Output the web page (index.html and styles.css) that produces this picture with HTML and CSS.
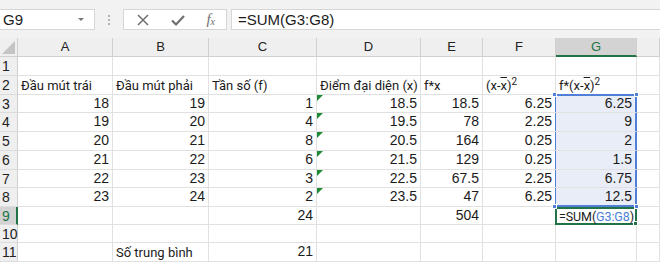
FILE: index.html
```html
<!DOCTYPE html>
<html lang="vi">
<head>
  <meta charset="UTF-8" />
  <title>Sheet</title>
  <link rel="stylesheet" href="styles.css">
</head>
<body>
  <div class="toolbar">
    <div class="name-box">
      <span>G9</span>
      <span class="caret"></span>
    </div>
    <div class="grip"><i></i><i></i><i></i></div>
    <div class="fx-buttons">
      <svg width="14" height="14" viewBox="0 0 14 14"><path d="M2 2 L12 12 M12 2 L2 12" stroke="#6f6f6f" stroke-width="1.5" fill="none"/></svg>
      <svg width="16" height="14" viewBox="0 0 16 14"><path d="M2 7.5 L6 11.5 L14 3" stroke="#6f6f6f" stroke-width="2.2" fill="none"/></svg>
      <span class="fx">f<sub>x</sub></span>
    </div>
    <div class="formula">=SUM(G3:G8)</div>
  </div>

  <div class="sheet">
    <div class="corner"><span></span></div>
    <div class="col-head">A</div>
    <div class="col-head">B</div>
    <div class="col-head">C</div>
    <div class="col-head">D</div>
    <div class="col-head">E</div>
    <div class="col-head">F</div>
    <div class="col-head active">G</div>
    <div class="col-head"></div>

    <div class="row-head">1</div>
    <div class="cell"></div><div class="cell"></div><div class="cell"></div><div class="cell"></div><div class="cell"></div><div class="cell"></div><div class="cell"></div><div class="cell"></div>

    <div class="row-head">2</div>
    <div class="cell txt">Đầu mút trái</div>
    <div class="cell txt">Đầu mút phải</div>
    <div class="cell txt">Tần số (f)</div>
    <div class="cell txt">Điểm đại diện (x)</div>
    <div class="cell txt">f*x</div>
    <div class="cell txt">(x-<span class="bar">x</span>)<sup>2</sup></div>
    <div class="cell txt">f*(x-<span class="bar">x</span>)<sup>2</sup></div>
    <div class="cell"></div>

    <div class="row-head">3</div>
    <div class="cell num">18</div><div class="cell num">19</div><div class="cell num">1</div>
    <div class="cell num flag">18.5</div><div class="cell num">18.5</div><div class="cell num">6.25</div>
    <div class="cell num sel top"><i class="h tl"></i><i class="h tr"></i>6.25</div><div class="cell"></div>

    <div class="row-head">4</div>
    <div class="cell num">19</div><div class="cell num">20</div><div class="cell num">4</div>
    <div class="cell num flag">19.5</div><div class="cell num">78</div><div class="cell num">2.25</div>
    <div class="cell num sel">9</div><div class="cell"></div>

    <div class="row-head">5</div>
    <div class="cell num">20</div><div class="cell num">21</div><div class="cell num">8</div>
    <div class="cell num flag">20.5</div><div class="cell num">164</div><div class="cell num">0.25</div>
    <div class="cell num sel">2</div><div class="cell"></div>

    <div class="row-head">6</div>
    <div class="cell num">21</div><div class="cell num">22</div><div class="cell num">6</div>
    <div class="cell num flag">21.5</div><div class="cell num">129</div><div class="cell num">0.25</div>
    <div class="cell num sel">1.5</div><div class="cell"></div>

    <div class="row-head">7</div>
    <div class="cell num">22</div><div class="cell num">23</div><div class="cell num">3</div>
    <div class="cell num flag">22.5</div><div class="cell num">67.5</div><div class="cell num">2.25</div>
    <div class="cell num sel">6.75</div><div class="cell"></div>

    <div class="row-head">8</div>
    <div class="cell num">23</div><div class="cell num">24</div><div class="cell num">2</div>
    <div class="cell num flag">23.5</div><div class="cell num">47</div><div class="cell num">6.25</div>
    <div class="cell num sel bot"><i class="h bl"></i><i class="h br"></i>12.5</div><div class="cell"></div>

    <div class="row-head active">9</div>
    <div class="cell"></div><div class="cell"></div><div class="cell num">24</div>
    <div class="cell"></div><div class="cell num">504</div><div class="cell"></div>
    <div class="cell edit">=SUM(<span class="ref">G3:G8</span>)<i class="h br"></i></div><div class="cell"></div>

    <div class="row-head">10</div>
    <div class="cell"></div><div class="cell"></div><div class="cell"></div><div class="cell"></div><div class="cell"></div><div class="cell"></div><div class="cell"></div><div class="cell"></div>

    <div class="row-head">11</div>
    <div class="cell"></div><div class="cell txt">Số trung bình</div><div class="cell num">21</div>
    <div class="cell"></div><div class="cell"></div><div class="cell"></div><div class="cell"></div><div class="cell"></div>
  </div>
</body>
</html>
```

FILE: styles.css
```css
:root {
  --grid: #e1e1e1;
  --head-bg: #efefef;
  --head-line: #d0d0d0;
  --green: #217346;
  --blue: #4f7fd6;
}
* {
  margin: 0;
  padding: 0;
  box-sizing: border-box;
}
body {
  background: #fff;
  font-family: 'Liberation Sans', Arial, sans-serif;
  color: #1b1b1b;
  width: 660px;
  height: 262px;
  overflow: hidden;
}

/* formula bar */
.toolbar {
  height: 38px;
  background: #f2f2f2;
  display: flex;
  align-items: flex-start;
  padding-top: 9px;
}
.name-box {
  width: 95px;
  height: 21px;
  background: #fff;
  border: 1px solid #d6d6d6;
  border-left: none;
  display: flex;
  align-items: center;
  justify-content: space-between;
  padding: 0 10px 0 3px;
  font-size: 15px;
}
.caret {
  width: 0;
  height: 0;
  border-left: 3px solid transparent;
  border-right: 3px solid transparent;
  border-top: 3px solid #777;
}
.grip {
  width: 28px;
  height: 21px;
  display: flex;
  flex-direction: column;
  align-items: center;
  justify-content: center;
  gap: 2px;
}
.grip i {
  width: 2px;
  height: 2px;
  background: #b4b4b4;
}
.fx-buttons {
  width: 104px;
  height: 21px;
  background: #fff;
  border: 1px solid #d6d6d6;
  display: flex;
  align-items: center;
  justify-content: space-between;
  padding: 0 11px 0 12px;
}
.fx {
  font-family: 'Liberation Serif', 'Times New Roman', serif;
  font-style: italic;
  font-size: 15px;
  color: #6f6f6f;
  line-height: 1;
}
.fx sub {
  font-size: 10px;
  vertical-align: -1px;
}
.formula {
  flex: 1;
  height: 21px;
  margin-left: 4px;
  background: #fff;
  border: 1px solid #d6d6d6;
  border-right: none;
  font-size: 15px;
  padding: 1px 0 0 6px;
}

/* sheet */
.sheet {
  display: grid;
  grid-template-columns: 18px 95px 96px 108px 104px 62px 73px 81px 1fr;
  grid-template-rows: 19px 19px 19px 18px 19px 19px 19px 18px 19px 18px 18px 19px;
  font-size: 14px;
}
.corner {
  background: var(--head-bg);
  border-right: 1px solid var(--head-line);
  border-bottom: 1px solid var(--head-line);
  display: flex;
  align-items: flex-end;
  justify-content: flex-end;
  padding: 0 2px 2px 0;
}
.corner span {
  width: 0;
  height: 0;
  border-left: 13px solid transparent;
  border-bottom: 13px solid #c4c4c4;
}
.col-head {
  background: var(--head-bg);
  border-right: 1px solid var(--head-line);
  border-bottom: 1px solid var(--head-line);
  text-align: center;
  font-size: 13px;
  line-height: 18px;
  color: #222;
}
.col-head.active {
  background: #d3d3d3;
  color: var(--green);
  border-bottom: 2px solid var(--green);
}
.row-head {
  background: var(--head-bg);
  border-right: 1px solid var(--head-line);
  border-bottom: 1px solid #dcdcdc;
  font-size: 14px;
  line-height: 18px;
  padding-left: 2px;
  color: #222;
}
.row-head.active {
  background: #d3d3d3;
  color: var(--green);
  border-right: 2px solid var(--green);
}
.cell {
  border-right: 1px solid var(--grid);
  border-bottom: 1px solid var(--grid);
  line-height: 17px;
  white-space: nowrap;
  position: relative;
}
.num {
  text-align: right;
  padding-right: 3px;
}
.txt {
  font-family: Roboto, 'Liberation Sans', sans-serif;
  font-size: 13px;
  padding: 1px 0 0 3px;
}
.txt sup {
  font-size: 10px;
  vertical-align: 5px;
  line-height: 0;
}
.bar {
  text-decoration: overline;
}
.flag::before {
  content: '';
  position: absolute;
  left: 0;
  top: 0;
  border-top: 6px solid #1e8a34;
  border-right: 6px solid transparent;
}

/* selected range G3:G8 */
.sel {
  background: #e8edf8;
  border-right-color: var(--blue);
  box-shadow: inset 1px 0 0 var(--blue), inset -1px 0 0 var(--blue);
  margin-left: -1px;
  padding-right: 4px;
}
.sel.top {
  box-shadow: inset 1px 0 0 var(--blue), inset -1px 0 0 var(--blue), inset 0 1px 0 var(--blue);
  margin-top: -1px;
  border-top: 1px solid var(--blue);
}
.sel.bot {
  border-bottom-color: var(--blue);
  box-shadow: inset 1px 0 0 var(--blue), inset -1px 0 0 var(--blue), inset 0 -1px 0 var(--blue);
}

/* active cell G9 */
.edit {
  margin-left: -1px;
  border: 2px solid var(--green);
  padding: 0 0 0 2px;
  font-family: Roboto, 'Liberation Sans', sans-serif;
  font-size: 12.5px;
  letter-spacing: -0.1px;
  line-height: 15px;
}
.ref {
  color: #4a7fd4;
}
.h {
  position: absolute;
  width: 5px;
  height: 5px;
  background: var(--blue);
  border: 1px solid #fff;
  z-index: 2;
}
.tl { left: -3px; top: -3px; }
.tr { right: -3px; top: -3px; }
.bl { left: -3px; bottom: -3px; }
.br { right: -3px; bottom: -3px; }
.edit .h {
  background: var(--green);
}
```
